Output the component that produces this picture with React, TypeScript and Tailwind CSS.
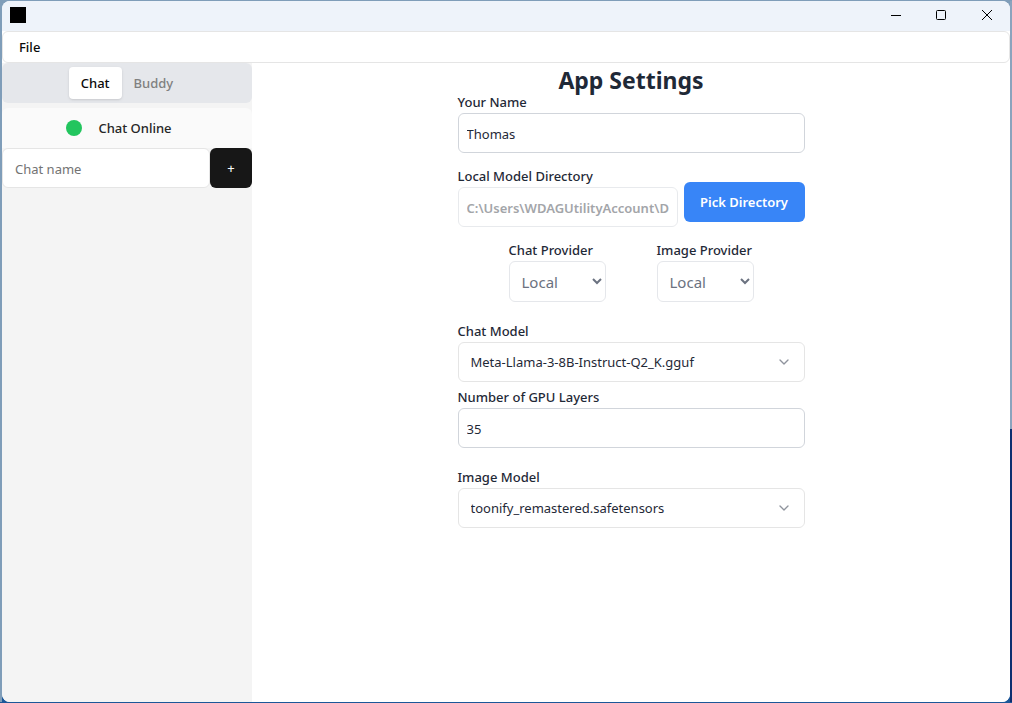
import { useState } from "react";
import type { ReactNode } from "react";
import { ChevronDown } from "lucide-react";

const inputClass =
  "h-10 w-full rounded-md border border-[#d1d5db] bg-white px-2 pt-0.5 text-[13px] text-[#1f2937] outline-none";

function Field({ id, label, children }: { id: string; label: string; children: ReactNode }) {
  return (
    <div className="flex flex-col">
      <label htmlFor={id} className="text-[13px] leading-[22px] font-medium whitespace-nowrap text-[#1f2937]">
        {label}
      </label>
      {children}
    </div>
  );
}

function ProviderSelect({ id, label }: { id: string; label: string }) {
  return (
    <Field id={id} label={label}>
      <select id={id} className="h-[41px] w-[97px] rounded-md border border-[#e5e7eb] bg-white p-2 text-[15px] text-[#6b7280]">
        <option>Local</option>
        <option>Remote</option>
      </select>
    </Field>
  );
}

function ModelSelect({ id, label, model }: { id: string; label: string; model: string }) {
  return (
    <Field id={id} label={label}>
      <div className="relative">
        <select
          id={id}
          className="h-10 w-full appearance-none rounded-md border border-[#e5e5e5] bg-white px-3 pt-0.5 text-[13px] text-[#1f2937]"
        >
          <option>{model}</option>
        </select>
        <ChevronDown className="pointer-events-none absolute inset-y-3 right-[13px] size-4 text-[#8f949d]" />
      </div>
    </Field>
  );
}

function TitleBar() {
  return (
    <header className="flex h-[30px] shrink-0 items-center justify-between bg-[#eef3fa] pb-0.5 pl-2">
      <div className="size-4 bg-black" />
      <div className="flex h-full">
        <button aria-label="Minimize" className="grid w-[45px] place-items-center">
          <svg width="10" height="10" viewBox="0 0 10 10" stroke="black">
            <path d="M0 5.5h10" />
          </svg>
        </button>
        <button aria-label="Maximize" className="grid w-[45px] place-items-center">
          <svg width="10" height="10" viewBox="0 0 10 10" fill="none" stroke="black">
            <rect x="0.5" y="0.5" width="9" height="9" rx="1" />
          </svg>
        </button>
        <button aria-label="Close" className="grid w-[47px] place-items-center">
          <svg width="10" height="10" viewBox="0 0 10 10" stroke="black">
            <path d="M0 0l10 10M10 0L0 10" />
          </svg>
        </button>
      </div>
    </header>
  );
}

function Sidebar() {
  const [chatName, setChatName] = useState("");
  return (
    <aside className="flex w-[250px] shrink-0 flex-col bg-[#f4f4f4] text-[13px] font-medium">
      <div role="tablist" className="flex h-10 items-center justify-center rounded-md bg-[#e5e7eb] p-1">
        <button
          role="tab"
          aria-selected="true"
          className="h-8 rounded bg-white px-3 pt-0.5 text-[#0a0a0a] shadow-sm"
        >
          Chat
        </button>
        <button role="tab" aria-selected="false" className="h-8 px-3 pt-0.5 text-[#808080]">
          Buddy
        </button>
      </div>
      <div className="mt-[5px] flex h-10 items-center justify-center gap-4 rounded-t-md bg-[#fafafa] pr-4">
        <span className="size-4 rounded-full bg-[#22c55e]" />
        <span className="pt-0.5 text-[#262626]">Chat Online</span>
      </div>
      <form className="flex" onSubmit={(event) => event.preventDefault()}>
        <input
          aria-label="Chat name"
          placeholder="Chat name"
          value={chatName}
          onChange={(event) => setChatName(event.target.value)}
          className="h-10 min-w-0 flex-1 rounded-md border border-[#e5e5e5] bg-white px-3 pt-0.5 font-normal outline-none placeholder:text-[#737373]"
        />
        <button aria-label="Add chat" className="h-10 w-[42px] rounded-md bg-[#171717] pt-0.5 text-[#fafafa]">
          +
        </button>
      </form>
    </aside>
  );
}

function Settings() {
  const [name, setName] = useState("Thomas");
  const [layers, setLayers] = useState("35");
  return (
    <main className="flex flex-1 justify-center bg-white">
      <div className="flex w-[347px] flex-col pt-1">
        <h1 className="h-6 text-center text-[23px] leading-[26px] font-bold text-[#1f2937]">App Settings</h1>
        <Field id="name" label="Your Name">
          <input id="name" value={name} onChange={(event) => setName(event.target.value)} className={inputClass} />
        </Field>
        <div className="mt-3 flex items-end gap-1.5">
          <div className="min-w-0 flex-1">
            <Field id="directory" label="Local Model Directory">
              <input
                id="directory"
                disabled
                value="C:\Users\WDAGUtilityAccount\Documents"
                className="h-10 w-full rounded-md border border-[#e8eaed] bg-white px-2 pt-0.5 text-[13px] font-semibold text-[#a3a5a9]"
              />
            </Field>
          </div>
          <button className="mb-[5px] h-10 w-[121px] rounded-md bg-[#3885f7] pt-0.5 text-[13px] font-semibold whitespace-nowrap text-white">
            Pick Directory
          </button>
        </div>
        <div className="mt-3 flex justify-evenly">
          <ProviderSelect id="chat-provider" label="Chat Provider" />
          <ProviderSelect id="image-provider" label="Image Provider" />
        </div>
        <div className="mt-[18px] flex flex-col gap-1">
          <ModelSelect id="chat-model" label="Chat Model" model="Meta-Llama-3-8B-Instruct-Q2_K.gguf" />
          <Field id="layers" label="Number of GPU Layers">
            <input
              id="layers"
              inputMode="numeric"
              value={layers}
              onChange={(event) => setLayers(event.target.value)}
              className={inputClass}
            />
          </Field>
        </div>
        <div className="mt-[18px]">
          <ModelSelect id="image-model" label="Image Model" model="toonify_remastered.safetensors" />
        </div>
      </div>
    </main>
  );
}

export default function App() {
  return (
    <div className="flex min-h-screen bg-linear-to-b from-[#7f9db9] from-61% to-[#1c5798] to-61% py-px font-['Noto_Sans',sans-serif]">
      <div className="w-0.5 shrink-0 bg-[#7f9db9]" />
      <div className="flex flex-1 flex-col overflow-hidden rounded-lg bg-white">
        <TitleBar />
        <nav className="flex h-8 shrink-0 items-center rounded-md border border-[#e5e5e5] bg-white px-1">
          <button className="px-3 pt-0.5 text-[13px] font-medium text-[#0a0a0a]">File</button>
        </nav>
        <div className="flex flex-1">
          <Sidebar />
          <Settings />
        </div>
      </div>
      <div className="w-0.5 shrink-0 bg-linear-to-b from-[#8ba3bd] from-61% to-[#0d2f70] to-61%" />
    </div>
  );
}
